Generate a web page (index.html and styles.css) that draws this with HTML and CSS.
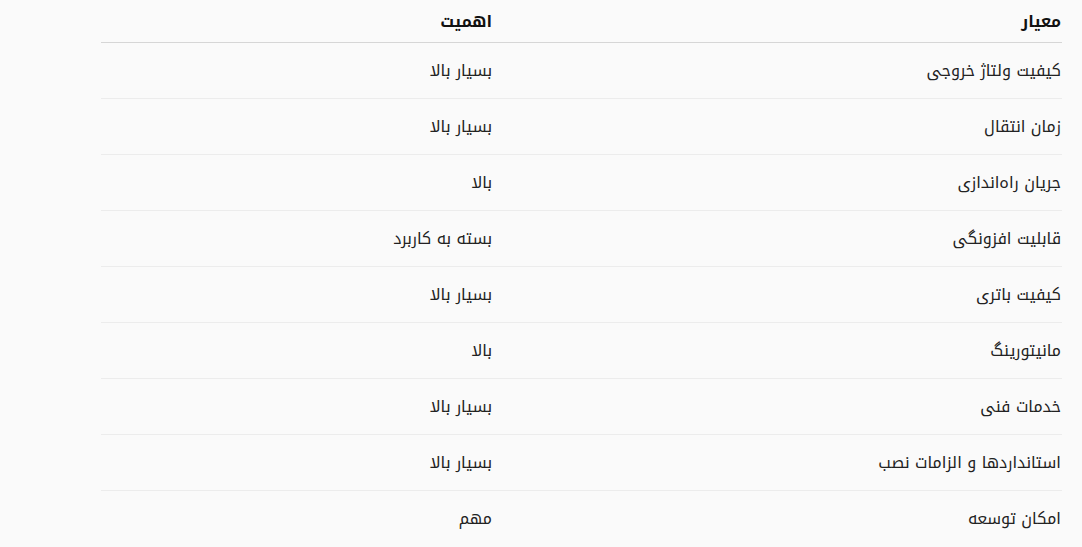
FILE: index.html
```html
<!DOCTYPE html>
<html lang="fa" dir="rtl">
<head>
<meta charset="utf-8">
<link rel="stylesheet" href="styles.css">
</head>
<body>
<div class="page">
  <div class="table">
    <div class="row head"><div class="c1">معیار</div><div class="c2">اهمیت</div></div>
    <div class="row"><div class="c1">کیفیت ولتاژ خروجی</div><div class="c2">بسیار بالا</div></div>
    <div class="row"><div class="c1">زمان انتقال</div><div class="c2">بسیار بالا</div></div>
    <div class="row"><div class="c1">جریان راه‌اندازی</div><div class="c2">بالا</div></div>
    <div class="row"><div class="c1">قابلیت افزونگی</div><div class="c2">بسته به کاربرد</div></div>
    <div class="row"><div class="c1">کیفیت باتری</div><div class="c2">بسیار بالا</div></div>
    <div class="row"><div class="c1">مانیتورینگ</div><div class="c2">بالا</div></div>
    <div class="row"><div class="c1">خدمات فنی</div><div class="c2">بسیار بالا</div></div>
    <div class="row"><div class="c1">استانداردها و الزامات نصب</div><div class="c2">بسیار بالا</div></div>
    <div class="row last"><div class="c1">امکان توسعه</div><div class="c2">مهم</div></div>
  </div>
</div>
</body>
</html>
```

FILE: styles.css
```css
html, body {
  margin: 0;
  padding: 0;
  background: #fafafa;
}
body {
  font-family: "Noto Kufi Arabic", "DejaVu Sans", sans-serif;
  font-size: 16px;
  font-weight: 400;
  color: #222;
  height: 547px;
  overflow: hidden;
}
.page {
  padding: 0 20px 0 101px;
  direction: rtl;
}
.table {
  width: 961px;
}
.row {
  display: grid;
  grid-template-columns: 569px 1fr;
  border-bottom: 1px solid #ececec;
  padding: 16px 0;
  line-height: 23px;
}
.row.head {
  padding: 10px 0 9px;
  font-weight: bold;
  color: #111;
  border-bottom-color: #d6d6d6;
}
.row.last {
  border-bottom: none;
}
.c1, .c2 {
  text-align: right;
  padding-right: 1px;
}
```
